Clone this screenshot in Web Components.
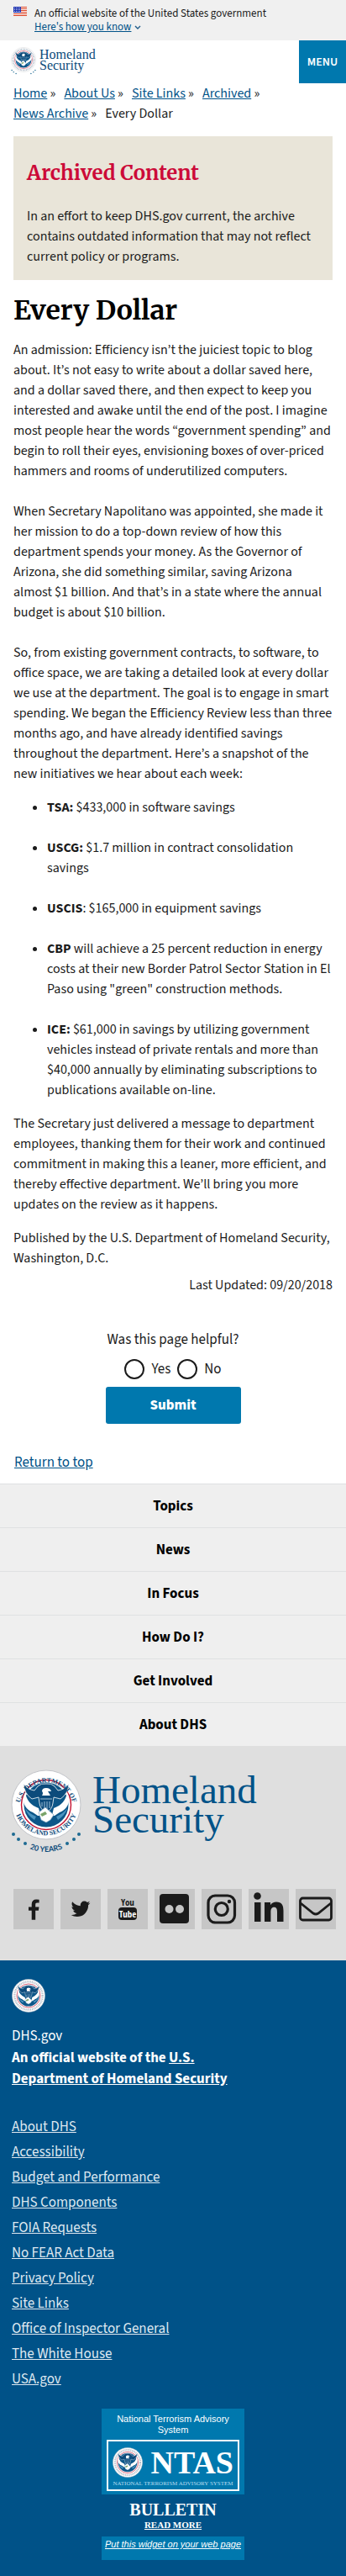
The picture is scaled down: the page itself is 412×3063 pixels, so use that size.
<!DOCTYPE html>
<html lang="en">
<head>
<meta charset="utf-8">
<meta name="viewport" content="width=device-width, initial-scale=1">
<title>Every Dollar | Homeland Security</title>
<style>
  html { --sans: "Source Sans 3", "Source Sans Pro", "Noto Sans CJK KR", "Noto Sans", sans-serif;
         --serif: "Merriweather", "DejaVu Serif Condensed", "DejaVu Serif", serif;
         --link: #005288; --brand: #0078ae; --navy: #005288; }
  body { margin: 0; background: #fff; color: #1b1b1b; font: 16px/24px var(--sans); }
</style>
</head>
<body>
<dhs-page></dhs-page>

<script>
const define = (name, html, setup) => {
  const template = document.createElement('template');
  template.innerHTML = html;
  customElements.define(name, class extends HTMLElement {
    constructor() {
      super();
      this.attachShadow({ mode: 'open' }).append(template.content.cloneNode(true));
    }
    connectedCallback() { if (setup) setup(this, this.shadowRoot); }
  });
};

/* Department seal: the lettered version is used only where it is large enough to read. */
define('dhs-seal', `
<style>
  :host { display: block; flex: none; width: 40px; }
  svg { display: block; width: 100%; }
  .dots { fill: none; stroke: #8494a8; stroke-width: 5; stroke-dasharray: 2 2; opacity: .7; }
  text { fill: #0c4b7b; font-weight: bold; text-anchor: middle; }
</style>
<svg viewBox="0 0 84 84" role="img" aria-label="U.S. Department of Homeland Security seal">
  <circle cx="42" cy="42" r="41" fill="#fff" stroke="#c3c5c9"/>
  <circle class="dots" cx="42" cy="42" r="35"/>
  <circle cx="42" cy="42" r="29.5" fill="#fff" stroke="#c41230" stroke-width="1.4"/>
  <circle cx="42" cy="42" r="26.5" fill="#0c5688"/>
  <path fill="#fff" d="M17 27 Q19 41 33 46 L36 58 L42 61 L48 58 L51 46 Q65 41 67 27 L69 33 Q70 46 58 51 L52 55 H32 L26 51 Q14 46 15 33Z"/>
  <path fill="#0c4b7b" stroke="#fff" stroke-width=".8" d="M15 17 Q20 24 28 25 L32 20 Q36 16 42 17 Q48 16 52 20 L56 25 Q64 24 69 17 Q68 29 59 35 L51 33 L50 40 Q49 48 42 51 Q35 48 34 40 L33 33 L25 35 Q16 29 15 17Z"/>
  <path fill="#fff" d="M37 31 Q39 28 37 26 Q37 22 42 22 Q47 22 48 26 L44 26 Q46 29 47 31Z"/>
  <path stroke="#9cc0da" stroke-width="1" fill="none" d="M35 35H49M37 39V44M40 38V48M43 38V48M46 38V46"/>
  <path fill="#fff" stroke="#7aa0bd" stroke-width=".7" d="M33 51 L41 45 L51 54 L47 60 L42 63 L36 60Z"/>
  <path fill="#7aa46a" d="M35 53 L41 50 L43 53 L37 56Z"/>
  <path fill="#4b93bf" d="M17 46 Q21 52 30 56 L28 60 Q19 54 17 46ZM67 46 Q63 52 54 56 L56 60 Q65 54 67 46Z"/>
  <g class="lettering">
    <path id="upper" fill="none" d="M9.500 48A32.500 32.500 0 1 1 74.500 48"/>
    <path id="lower" fill="none" d="M4 46A38.500 38.500 0 0 0 80 46"/>
    <path id="ribbon" fill="none" d="M10 88Q42 108 74 88"/>
    <text font-family="Liberation Serif, serif" font-size="8"><textPath href="#upper" startOffset="50%">U.S. DEPARTMENT OF</textPath></text>
    <text font-family="Liberation Serif, serif" font-size="8"><textPath href="#lower" startOffset="50%">HOMELAND SECURITY</textPath></text>
    <text font-family="Lato, sans-serif" font-size="9"><textPath href="#ribbon" startOffset="50%">20 YEARS</textPath></text>
  </g>
  <g class="years" fill="#1d6a92"><circle cx="3" cy="77" r="2"/><circle cx="9" cy="83" r="2"/><circle cx="17" cy="88" r="2"/><circle cx="67" cy="88" r="2"/><circle cx="75" cy="83" r="2"/><circle cx="81" cy="77" r="2"/></g>
</svg>`, (host, root) => {
  const drop = name => root.querySelector(name)?.remove();
  drop(host.hasAttribute('lettered') ? '.dots' : '.lettering');
  if (host.hasAttribute('years')) root.querySelector('svg').setAttribute('viewBox', '0 0 84 100');
  else drop('.years');
});

define('gov-banner', `
<style>
  :host { display: block; background: #f0f0f0; padding: 8px 16px; font-size: 13px; line-height: 16px; }
  .row { display: flex; align-items: flex-start; gap: 9px; }
  svg { display: block; }
  .flag { flex: none; width: 16px; height: 11px; }
  p { margin: 0; }
  button { display: inline-flex; align-items: center; gap: 4px; border: 0; padding: 0; background: none; font: inherit; color: var(--link); }
  span { text-decoration: underline; }
</style>
<div class="row">
  <svg class="flag" viewBox="0 0 16 11" aria-hidden="true"><path fill="#fff" d="M0 0h16v11H0z"/><path stroke="#db3e1f" d="M0 .5h16M0 2.500h16M0 4.500h16M0 6.500h16M0 8.500h16M0 10.500h16"/><path fill="#1e33b1" d="M0 0h9v7H0z"/><path stroke="#fff" stroke-dasharray="1 1" stroke-width=".8" d="M1 1.500h7M1 3.500h7M1 5.500h7"/></svg>
  <div><p>An official website of the United States government</p>
  <button type="button"><span>Here's how you know</span><svg width="8" height="5" viewBox="0 0 8 5" aria-hidden="true"><path d="M1 1l3 3 3-3" fill="none" stroke="#205c8a" stroke-width="1.400"/></svg></button></div>
</div>`);

define('site-header', `
<style>
  :host { display: flex; justify-content: space-between; align-items: flex-start; }
  .brand { display: flex; gap: 4px; margin: 8px 0 0 13px; color: #0c4b7b; text-decoration: none; font: 16px/13px "Liberation Serif", serif; }
  dhs-seal { width: 30px; }
  .name { padding-top: 2px; }
  .name span { display: block; }
  button { width: 56px; height: 51px; padding: 0; border: 0; background: var(--brand); color: #fff; font: 600 14px/24px var(--sans); }
</style>
<a class="brand" href="#"><dhs-seal years></dhs-seal><span class="name"><span>Homeland</span><span>Security</span></span></a>
<button type="button">MENU</button>`);

define('bread-crumbs', `
<style>
  :host { display: block; padding: 0 16px; }
  ol { display: flex; flex-wrap: wrap; column-gap: 10px; margin: 0; padding: 0; list-style: none; }
  a { color: var(--link); }
</style>
<nav aria-label="Breadcrumb"><ol>
  <li><a href="#">Home</a> »</li><li><a href="#">About Us</a> »</li><li><a href="#">Site Links</a> »</li><li><a href="#">Archived</a> »</li><li><a href="#">News Archive</a> »</li><li>Every Dollar</li>
</ol></nav>`);

define('archive-notice', `
<style>
  :host { display: block; margin: 15px 16px 0; padding: 26px 16px 16px; background: #e9e5d9; }
  h2 { margin: 0 0 21px; color: #cc0a38; font: bold 24px/36px var(--serif); }
  p { margin: 0; }
</style>
<h2>Archived Content</h2><p><slot></slot></p>`);

define('blog-post', `
<style>
  :host { display: block; padding: 0 16px; }
  h1 { margin: 16px 0 15px; color: #000; font: bold 32px/40px var(--serif); }
  .updated { margin: 8px 0 0; text-align: right; }
</style>
<h1><slot name="title"></slot></h1><slot></slot><p class="updated"><slot name="updated"></slot></p>`);

define('savings-list', `
<style>
  ul { margin: 0 0 16px; padding: 0 0 0 40px; }
  li + li { margin-top: 24px; }
</style>
<ul>
  <li><b>TSA:</b> $433,000 in software savings</li>
  <li><b>USCG:</b> $1.7 million in contract consolidation savings</li>
  <li><b>USCIS</b>: $165,000 in equipment savings</li>
  <li><b>CBP</b> will achieve a 25 percent reduction in energy costs at their new Border Patrol Sector Station in El Paso using "green" construction methods.</li>
  <li><b>ICE:</b> $61,000 in savings by utilizing government vehicles instead of private rentals and more than $40,000 annually by eliminating subscriptions to publications available on-line.</li>
</ul>`);

define('page-feedback', `
<style>
  :host { display: block; padding: 41px 16px 0; font-size: 17px; text-align: center; }
  fieldset { margin: 0; padding: 0; border: 0; }
  legend { width: 100%; padding: 0; }
  .choices { display: flex; justify-content: center; gap: 8px; margin: 11px 0 9px; }
  label { display: flex; gap: 8px; }
  input { appearance: none; box-sizing: border-box; width: 24px; height: 24px; margin: 0; border: 2px solid #1b1b1b; border-radius: 50%; background: #fff; }
  input:checked { background: radial-gradient(#005288 55%, #fff 60%); }
  button { width: 161px; height: 44px; padding: 0; border: 0; border-radius: 3px; background: var(--brand); color: #fff; font: 800 17px/24px var(--sans); }
</style>
<form><fieldset><legend>Was this page helpful?</legend>
  <div class="choices"><label><input type="radio" name="helpful" value="yes">Yes</label><label><input type="radio" name="helpful" value="no">No</label></div>
</fieldset><button type="button">Submit</button></form>`);

define('return-top', `
<style>
  :host { display: block; padding: 34px 17px 13px; font-size: 17px; }
  a { color: var(--link); }
</style>
<a href="#">Return to top</a>`);

define('footer-nav', `
<style>
  :host { display: block; }
  a { box-sizing: border-box; display: block; height: 52px; padding: 14px 16px; border-top: 1px solid #dfe1e2; background: #efefef; color: #000; font-size: 17px; font-weight: bold; text-align: center; text-decoration: none; }
</style>
<nav><a href="#">Topics</a><a href="#">News</a><a href="#">In Focus</a><a href="#">How Do I?</a><a href="#">Get Involved</a><a href="#">About DHS</a></nav>`);

define('social-bar', `
<style>
  :host { display: block; background: #dfdfdf; padding: 28px 12px 37px 16px; }
  .brand { display: flex; gap: 13px; color: #005288; text-decoration: none; font: 47px/35px "Liberation Serif", serif; }
  dhs-seal { width: 84px; margin-left: -3px; }
  .name { padding-top: 7px; }
  .name span { display: block; }
  ul { display: grid; grid-template-columns: repeat(7, 48px); justify-content: space-between; margin: 42px 0 0; padding: 0; list-style: none; }
  .tile { display: block; height: 48px; background: #c6c6c6; }
  .tile svg { display: block; fill: #1b1b1b; }
  text { font: bold 11px "Liberation Sans Narrow", "Open Sans Condensed", "Roboto Condensed", sans-serif; text-anchor: middle; }
  .tube { fill: #fff; }
</style>
<a class="brand" href="#"><dhs-seal lettered years></dhs-seal><span class="name"><span>Homeland</span><span>Security</span></span></a>
<ul>
  <li><a class="tile" href="#" aria-label="Facebook"><svg viewBox="0 0 48 48"><path transform="translate(11 12.500) scale(.0146)" d="M1343 12v264h-157q-86 0-116 36t-30 108v189h293l-39 296h-254v759h-306v-759h-255v-296h255v-218q0-186 104-288.500t277-102.500q147 0 228 12z"/></svg></a></li>
  <li><a class="tile" href="#" aria-label="Twitter"><svg viewBox="0 0 48 48"><path transform="translate(11 10.800) scale(.0145)" d="M1684 408q-67 98-162 167 1 14 1 42 0 130-38 259.500t-115.500 248.500-184.500 210.500-258 146-323 54.500q-271 0-496-145 35 4 78 4 225 0 401-138-105-2-188-64.500t-114-159.500q33 5 61 5 43 0 85-11-112-23-185.500-111.500t-73.500-205.500v-4q68 38 146 41-66-44-105-115t-39-154q0-88 44-163 121 149 294.500 238.500t371.500 99.500q-8-38-8-74 0-134 94.500-228.500t228.500-94.500q140 0 236 102 109-21 205-78-37 115-142 178 93-10 186-50z"/></svg></a></li>
  <li><a class="tile" href="#" aria-label="YouTube"><svg viewBox="0 0 48 48"><text x="24" y="20">You</text><rect x="13" y="22" width="22" height="15" rx="4"/><text class="tube" x="24" y="34">Tube</text></svg></a></li>
  <li><a class="tile" href="#" aria-label="Flickr"><svg viewBox="0 0 48 48"><rect x="6" y="6" width="35" height="35" rx="4"/><circle cx="17.500" cy="24" r="5" fill="#c6c6c6"/><circle cx="30" cy="24" r="5" fill="#c6c6c6"/></svg></a></li>
  <li><a class="tile" href="#" aria-label="Instagram"><svg viewBox="0 0 48 48"><g fill="none" stroke="#1b1b1b" stroke-width="3.200"><rect x="8" y="8" width="31.500" height="32" rx="8.500"/><circle cx="23.800" cy="24" r="7.500"/></g><circle cx="33" cy="15" r="2.200"/></svg></a></li>
  <li><a class="tile" href="#" aria-label="LinkedIn"><svg viewBox="0 0 48 48"><circle cx="10.500" cy="8.500" r="4.300"/><path d="M7 16h7.500v23H7zM19 16h7v3.200c1.500-2.500 4-3.700 7-3.700 6.500 0 8.500 4 8.500 10.500v13H34V27.500c0-3-.5-5.700-3.600-5.700-3.200 0-4 2.500-4 5.500V39H19z"/></svg></a></li>
  <li><a class="tile" href="#" aria-label="Email"><svg viewBox="0 0 48 48"><g fill="none" stroke="#1b1b1b" stroke-width="2.800"><rect x="5.500" y="11" width="37" height="26" rx="3"/><path d="M6 17l15 12q3 2 6 0L42 17"/></g></svg></a></li>
</ul>`);

define('site-identifier', `
<style>
  :host { display: block; background: var(--navy); color: #fff; padding: 22px 14px 20px; font-size: 17px; }
  dhs-seal { margin-bottom: 16px; }
  p { margin: 0; }
  .agency { font-weight: bold; line-height: 25px; max-width: 280px; margin: 2px 0 29px; }
  .agency a { color: #fff; }
  ul { margin: 0; padding: 0; list-style: none; line-height: 30px; }
  a { color: #dfe8f0; }
</style>
<dhs-seal></dhs-seal>
<p>DHS.gov</p>
<p class="agency">An official website of the <a href="#">U.S. Department of Homeland Security</a></p>
<ul>
  <li><a href="#">About DHS</a></li><li><a href="#">Accessibility</a></li><li><a href="#">Budget and Performance</a></li><li><a href="#">DHS Components</a></li><li><a href="#">FOIA Requests</a></li><li><a href="#">No FEAR Act Data</a></li><li><a href="#">Privacy Policy</a></li><li><a href="#">Site Links</a></li><li><a href="#">Office of Inspector General</a></li><li><a href="#">The White House</a></li><li><a href="#">USA.gov</a></li>
</ul>`);

define('ntas-widget', `
<style>
  :host { display: block; background: var(--navy); padding-bottom: 19px; color: #fff; text-align: center; font: 11px/13px "Liberation Sans", sans-serif; }
  .card { width: 170px; margin: 0 auto; }
  .panel { box-sizing: border-box; height: 102px; padding: 6px; background: var(--brand); }
  p { margin: 0 0 5px; }
  .sign { box-sizing: border-box; display: block; height: 61px; padding: 6px 5px 0; border: 2px solid #fff; color: #fff; text-decoration: none; }
  .row { display: flex; align-items: center; justify-content: space-between; height: 38px; font: bold 38px/38px "Liberation Serif", serif; }
  dhs-seal { width: 36px; }
  .small { display: block; font: 7px/12px "Liberation Serif", serif; white-space: nowrap; color: #b7dcf0; }
  .bulletin { display: block; height: 50px; box-sizing: border-box; padding-top: 8px; color: #fff; text-decoration: none; font: bold 20px/20px "Liberation Serif", serif; }
  .more { display: block; font-size: 11px; line-height: 16px; text-decoration: underline; }
  .strip { display: block; height: 28px; box-sizing: border-box; padding-top: 3px; background: var(--brand); color: #fff; font-style: italic; }
</style>
<div class="card">
  <div class="panel"><p>National Terrorism Advisory System</p>
    <a class="sign" href="#"><span class="row"><dhs-seal></dhs-seal><span>NTAS</span></span><span class="small">NATIONAL TERRORISM ADVISORY SYSTEM</span></a></div>
  <a class="bulletin" href="#">BULLETIN<span class="more">READ MORE</span></a>
  <a class="strip" href="#">Put this widget on your web page</a>
</div>`);

define('dhs-page', `
<style>
  :host { display: block; }
  p { margin: 0 0 24px; }
  .tight { margin-bottom: 16px; }
  .last { margin-bottom: 0; }
</style>
<gov-banner></gov-banner>
<site-header></site-header>
<bread-crumbs></bread-crumbs>
<main>
  <archive-notice>In an effort to keep DHS.gov current, the archive contains outdated information that may not reflect current policy or programs.</archive-notice>
  <blog-post>
    <span slot="title">Every Dollar</span>
    <p>An admission: Efficiency isn’t the juiciest topic to blog about. It’s not easy to write about a dollar saved here, and a dollar saved there, and then expect to keep you interested and awake until the end of the post. I imagine most people hear the words “government spending” and begin to roll their eyes, envisioning boxes of over-priced hammers and rooms of underutilized computers.</p>
    <p>When Secretary Napolitano was appointed, she made it her mission to do a top-down review of how this department spends your money. As the Governor of Arizona, she did something similar, saving Arizona almost $1 billion. And that’s in a state where the annual budget is about $10 billion.</p>
    <p class="tight">So, from existing government contracts, to software, to office space, we are taking a detailed look at every dollar we use at the department. The goal is to engage in smart spending. We began the Efficiency Review less than three months ago, and have already identified savings throughout the department. Here’s a snapshot of the new initiatives we hear about each week:</p>
    <savings-list></savings-list>
    <p class="tight">The Secretary just delivered a message to department employees, thanking them for their work and continued commitment in making this a leaner, more efficient, and thereby effective department. We’ll bring you more updates on the review as it happens.</p>
    <p class="last">Published by the U.S. Department of Homeland Security, Washington, D.C.</p>
    <span slot="updated">Last Updated: 09/20/2018</span>
  </blog-post>
  <page-feedback></page-feedback>
  <return-top></return-top>
</main>
<footer>
  <footer-nav></footer-nav>
  <social-bar></social-bar>
  <site-identifier></site-identifier>
  <ntas-widget></ntas-widget>
</footer>`);
</script>
</body>
</html>
